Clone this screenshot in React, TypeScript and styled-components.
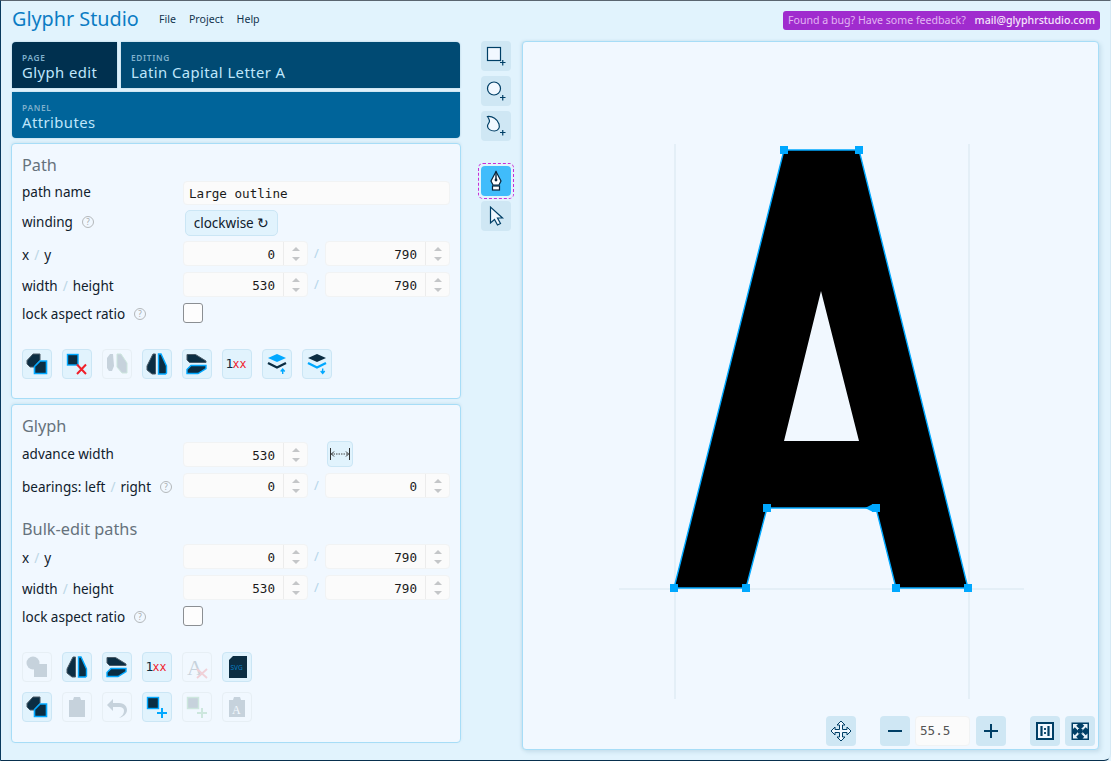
import styled, { createGlobalStyle } from 'styled-components';
import type { ReactNode } from 'react';

const GlobalStyle = createGlobalStyle`
    html, body {
        margin: 0;
        padding: 0;
        height: 761px;
        overflow: hidden;
        background: #e1f3fd;
        font-family: "Noto Sans", "Open Sans", sans-serif;
    }
`;

const Frame = styled.div`
    box-sizing: border-box;
    width: 1111px;
    height: 761px;
    background: #e1f3fd;
    border-left: 1px solid #0a3a5e;
    border-top: 1px solid #5a6570;
    border-bottom: 1px solid #08304e;
    border-right: 1px solid #d5e9f5;
    border-bottom-right-radius: 7px;
    padding: 0 11px 0 11px;
    display: flex;
    flex-direction: column;
`;

const TopBar = styled.header`
    height: 40px;
    display: flex;
    align-items: center;
    flex-shrink: 0;
`;

const Logo = styled.div`
    font-size: 19.8px;
    color: #0b7cc4;
    width: 147px;
    margin-top: -6px;
`;

const Menu = styled.div`
    display: flex;
    gap: 13px;
    font-size: 10.6px;
    color: #12344e;
    margin-top: -4px;
`;

const Feedback = styled.div`
    margin-left: auto;
    margin-right: -1px;
    margin-top: -2px;
    height: 19px;
    width: 317px;
    box-sizing: border-box;
    background: #a02cce;
    border-radius: 3px;
    display: flex;
    align-items: center;
    justify-content: space-between;
    padding: 0 5px;
    font-size: 10.6px;
    color: #e3b6f3;
    white-space: nowrap;

    b {
        font-weight: 500;
        color: #f6e6fb;
    }
`;

const Body = styled.div`
    display: flex;
    flex: 1;
`;

const LeftColumn = styled.div`
    width: 448px;
    display: flex;
    flex-direction: column;
    margin-top: 1px;
`;

const TileStack = styled.div`
    display: flex;
    flex-direction: column;
    gap: 4px;
`;

const TileRow = styled.div`
    display: flex;
    gap: 4px;
`;

const Tile = styled.div<{ $bg: string; $w?: number; $r: string }>`
    box-sizing: border-box;
    height: 46px;
    background: ${p => p.$bg};
    border-radius: ${p => p.$r};
    ${p => (p.$w ? `width: ${p.$w}px;` : 'flex: 1;')}
    padding: 11px 10px 0 10px;
    display: flex;
    flex-direction: column;
    box-shadow: 0 0 2px #9fc5da;
`;

const TileLabel = styled.span`
    font-size: 8.3px;
    line-height: 9px;
    font-weight: 600;
    letter-spacing: 0.7px;
    color: #7fb0cc;
`;

const TileValue = styled.span`
    font-size: 14.8px;
    line-height: 21px;
    letter-spacing: 0.45px;
    color: #bfe6fb;
`;

const Panel = styled.section<{ $h: number }>`
    box-sizing: border-box;
    width: 450px;
    height: ${p => p.$h}px;
    margin: 5px 0 0 -1px;
    background: #f1f8ff;
    border: 1px solid #a7ddf7;
    border-radius: 4px;
    padding: 11px 10px 0 10px;
    box-shadow: 0 -1px 3px #cfe5f1;
    display: flex;
    flex-direction: column;
`;

const Heading = styled.h2<{ $top?: number; $bottom: number }>`
    margin: ${p => p.$top ?? 0}px 0 ${p => p.$bottom}px 0;
    font-size: 16.3px;
    line-height: 21px;
    font-weight: 400;
    color: #66727c;
`;

const Row = styled.div<{ $h?: number }>`
    display: grid;
    grid-template-columns: 161px 125px 17px 125px;
    height: ${p => p.$h ?? 31}px;
    align-items: start;
`;

const Label = styled.label<{ $nudge?: number }>`
    font-size: 13.5px;
    line-height: 20px;
    padding-top: ${p => p.$nudge ?? 2}px;
    color: #10202c;
    white-space: nowrap;
    display: flex;
    align-items: center;

    i {
        font-style: normal;
        color: #bcd7e6;
        margin: 0 5px;
    }
`;

const Help = styled.span`
    box-sizing: border-box;
    display: inline-flex;
    align-items: center;
    justify-content: center;
    width: 12px;
    height: 12px;
    margin-left: 9px;
    border: 1px solid #b4b8bb;
    border-radius: 50%;
    font-size: 8px;
    color: #a5a9ac;
`;

const Slash = styled.span`
    text-align: center;
    font-size: 13px;
    line-height: 25px;
    color: #b6d6ea;
`;

const FieldBox = styled.div`
    box-sizing: border-box;
    height: 25px;
    display: flex;
    background: #fbfbfb;
    border: 1px solid #f1f3f4;
    border-radius: 4px;
`;

const FieldValue = styled.div<{ $right?: boolean }>`
    flex: 1;
    padding: 0 8px 0 5px;
    text-align: ${p => (p.$right ? 'right' : 'left')};
    font-family: "DejaVu Sans Mono", "Liberation Mono", monospace;
    font-size: 12.6px;
    line-height: ${p => (p.$right ? 25 : 23)}px;
    color: #1a1a1a;
`;

const Spinner = styled.div`
    width: 23px;
    border-left: 1px solid #ececec;
    display: flex;
    flex-direction: column;
    align-items: center;
    justify-content: center;
    gap: 6px;
`;

const Arrow = styled.span<{ $down?: boolean }>`
    width: 0;
    height: 0;
    border-left: 4px solid transparent;
    border-right: 4px solid transparent;
    ${p => (p.$down ? 'border-top' : 'border-bottom')}: 4px solid #c4c6c8;
`;

const NameField = styled(FieldBox)`
    grid-column: 2 / 5;
    height: 24px;
`;

const WindingButton = styled.button`
    box-sizing: border-box;
    margin: 0 0 0 2px;
    width: 93px;
    height: 26px;
    padding: 0;
    background: #e1f3fd;
    border: 1px solid #cbe6f5;
    border-radius: 5px;
    font-family: inherit;
    font-size: 13.5px;
    color: #10202c;
    white-space: nowrap;
`;

const CheckBox = styled.div`
    box-sizing: border-box;
    width: 20px;
    height: 20px;
    background: #fdfdfd;
    border: 1px solid #8b8f93;
    border-radius: 3px;
`;

const ActionRow = styled.div<{ $top: number }>`
    display: flex;
    gap: 10px;
    margin-top: ${p => p.$top}px;
`;

const ActionButton = styled.button<{ $off?: boolean }>`
    box-sizing: border-box;
    width: 30px;
    height: 30px;
    padding: 0;
    background: ${p => (p.$off ? '#f1f8ff' : '#e1f3fd')};
    border: 1px solid ${p => (p.$off ? '#e7eff5' : '#cbe6f5')};
    border-radius: 4px;
    display: flex;
    align-items: center;
    justify-content: center;

    svg {
        opacity: ${p => (p.$off ? 0.18 : 1)};
    }
`;

const FitButton = styled(ActionButton)`
    width: 26px;
    height: 26px;
    margin-left: 19px;
    margin-top: -1px;
`;

const ToolColumn = styled.div`
    width: 62px;
    flex-shrink: 0;
    display: flex;
    flex-direction: column;
    align-items: center;
    padding-left: 10px;
    box-sizing: border-box;
    gap: 5px;
`;

const ToolButton = styled.div<{ $on?: boolean; $gap?: number }>`
    width: 30px;
    height: 30px;
    margin-top: ${p => p.$gap ?? 0}px;
    border-radius: 4px;
    background: ${p => (p.$on ? '#40bcfb' : '#cfe7f4')};
    display: flex;
    align-items: center;
    justify-content: center;
    position: relative;
    flex-shrink: 0;
`;

const DashedRing = styled.span`
    position: absolute;
    inset: -3px;
    border: 1px dashed #c92bd8;
    border-radius: 5px;
`;

const Canvas = styled.main`
    position: relative;
    width: 578px;
    height: 709px;
    box-sizing: border-box;
    background: #f1f8ff;
    border: 1px solid #a7ddf7;
    border-radius: 4px;
    box-shadow: -1px 0 3px #c7dfec, 2px 2px 4px #c7dfec;
`;

const GlyphDrawing = styled.svg`
    position: absolute;
    left: -1px;
    top: -1px;
`;

const ZoomBar = styled.div`
    position: absolute;
    right: 3px;
    bottom: 3px;
    display: flex;
    align-items: center;
`;

const ZoomButton = styled(ToolButton)<{ $left?: number }>`
    margin-left: ${p => p.$left ?? 0}px;
`;

const ZoomField = styled.div`
    box-sizing: border-box;
    width: 55px;
    height: 30px;
    margin-left: 5px;
    background: #fbfbfb;
    border: 1px solid #f1f3f4;
    border-radius: 4px;
    padding-left: 4px;
    font-family: "DejaVu Sans Mono", "Liberation Mono", monospace;
    font-size: 12.6px;
    line-height: 28px;
    color: #555;
`;

const DARK = '#0b2d42';
const BLUE = '#00a8ff';
const NAVY = '#003f66';
const RED = '#f0202a';
const PALE = '#f1f8ff';

function Ico({ children }: { children: ReactNode }) {
    return (
        <svg width={30} height={30} viewBox="0 0 30 30" style={{ display: 'block', flexShrink: 0, margin: -1 }}>
            {children}
        </svg>
    );
}

const IconCombine = () => (
    <Ico>
        <path d="M5 11.500 11 5h7v6l-6 7H8l-3-3z" fill={DARK} stroke="#4a5a66" />
        <path d="M18 12h6.500v12.500H12.500V17.500z" fill={DARK} stroke={BLUE} strokeWidth="1.600" />
    </Ico>
);

const IconDelete = () => (
    <Ico>
        <rect x="5.500" y="5.500" width="10.500" height="10.500" fill={DARK} stroke={BLUE} strokeWidth="1.400" />
        <path d="M15 15.500 24 25M24 15.500 15 25" stroke={RED} strokeWidth="2" fill="none" />
    </Ico>
);

const IconPair = () => (
    <Ico>
        <path d="M5 9 8 5h3l1 12-2 5H7l-2-3z" fill={DARK} />
        <path d="M15 5h4l6 9v10h-5l-5-6z" fill={DARK} stroke="#2f9c50" />
    </Ico>
);

const IconFlipV = () => (
    <Ico>
        <path d="M5 17 11 5h2.500v20H10l-5-4z" fill={DARK} stroke="#4a5a66" />
        <path d="M16.500 5H19l5.500 12v7l-1 1h-7z" fill={DARK} stroke={BLUE} strokeWidth="1.400" />
    </Ico>
);

const IconFlipH = () => (
    <Ico>
        <path d="M5 5.500h8.500l10.500 6.500v1.500H7.500L5 11z" fill={DARK} stroke="#4a5a66" />
        <path d="M9 16.500h15v3l-8 5H5v-4z" fill={DARK} stroke={BLUE} strokeWidth="1.400" />
    </Ico>
);

const IconRound = () => (
    <Ico>
        <text x="3.500" y="19" fontFamily="DejaVu Sans Mono, monospace" fontSize="13" fill={DARK}>1</text>
        <text x="10.500" y="19" fontFamily="DejaVu Sans Mono, monospace" fontSize="11.600" fill={RED}>xx</text>
    </Ico>
);

const IconLayerUp = () => (
    <Ico>
        <path d="M6 9 15 5l9 4-9 4z" fill={BLUE} />
        <path d="M6 14 15 18.500 24 14" fill="none" stroke={DARK} strokeWidth="2.400" />
        <path d="M20.700 25v-4.500M18.700 22.500l2-2.500 2 2.500" stroke={BLUE} strokeWidth="1.400" fill="none" />
    </Ico>
);

const IconLayerDown = () => (
    <Ico>
        <path d="M6 9 15 5l9 4-9 4z" fill={DARK} />
        <path d="M6 14 15 18.500 24 14" fill="none" stroke={BLUE} strokeWidth="2.400" />
        <path d="M20.700 19.500V24M18.700 22l2 2.500 2-2.500" stroke={BLUE} strokeWidth="1.400" fill="none" />
    </Ico>
);

const IconCircles = () => (
    <Ico>
        <circle cx="11" cy="11" r="6.500" fill={DARK} />
        <rect x="12" y="12" width="13" height="13" fill={DARK} />
    </Ico>
);

const IconFont = () => (
    <Ico>
        <text x="5" y="23" fontFamily="Liberation Serif, serif" fontSize="22" fill={DARK}>A</text>
        <path d="M15 17 25 26M25 17 15 26" stroke={RED} strokeWidth="1.800" />
    </Ico>
);

const IconSvg = () => (
    <Ico>
        <path d="M11 4h14v22H7V8z" fill={DARK} />
        <text x="8.500" y="18" fontFamily="Noto Sans, sans-serif" fontSize="6.500" fill="#0a7fc0">SVG</text>
    </Ico>
);

const IconPaste = () => (
    <Ico>
        <path d="M7 8h4l1-3h6l1 3h4v17H7z" fill={DARK} />
    </Ico>
);

const IconUndo = () => (
    <Ico>
        <path d="M5 13 11 7v4h6c6 0 8 4 8 7 0 4-4 7-8 8 3-2 5-4 5-7s-2-4-5-4h-6v4z" fill={DARK} />
    </Ico>
);

const IconAddPath = ({ color }: { color: string }) => (
    <Ico>
        <rect x="5.500" y="5.500" width="11" height="11" fill={DARK} stroke={color} strokeWidth="1.400" />
        <path d="M15 21h10M20 16v10" stroke={color} strokeWidth="2" />
    </Ico>
);

const IconPasteFont = () => (
    <Ico>
        <path d="M7 8h4l1-3h6l1 3h4v17H7z" fill={DARK} />
        <text x="10" y="22" fontFamily="Liberation Serif, serif" fontSize="12" fill="#fff">A</text>
    </Ico>
);

const IconWidth = () => (
    <svg width="22" height="14" viewBox="0 0 22 14">
        <path d="M1.500 1v12M20.500 1v12" stroke="#333" />
        <path d="M2 7h18" stroke="#444" strokeDasharray="1.500 1" />
        <path d="M5 4.500 2.500 7 5 9.500M17 4.500 19.500 7 17 9.500" stroke="#333" fill="none" />
    </svg>
);

const ToolPlus = () => <path d="M19 21.500h5.500M21.750 19v5.500" stroke={NAVY} strokeWidth="1.200" />;

const IconNewRect = () => (
    <Ico>
        <rect x="6.500" y="6.500" width="13" height="13" fill={PALE} stroke={NAVY} strokeWidth="1.200" />
        <ToolPlus />
    </Ico>
);

const IconNewOval = () => (
    <Ico>
        <circle cx="13" cy="12.500" r="6.500" fill={PALE} stroke={NAVY} strokeWidth="1.200" />
        <ToolPlus />
    </Ico>
);

const IconNewPath = () => (
    <Ico>
        <path d="M6.500 5.500c5-.5 10 2.500 11.500 7.500 1 3.500-.5 7-4.500 7-4 0-7-2-7-5 0-2 2-3 2-5 0-1.500-1-3-2-4.500z" fill={PALE} stroke={NAVY} strokeWidth="1.200" />
        <ToolPlus />
    </Ico>
);

const IconPen = () => (
    <Ico>
        <path d="M15 5.500 20 15 18 19H12L10 15z" fill="#fff" stroke="#07233a" strokeWidth="1.200" />
        <path d="M15 5.500v8" stroke="#07233a" strokeWidth="1.400" />
        <circle cx="15" cy="14" r="1.400" fill="#07233a" />
        <rect x="11.500" y="20" width="7" height="4" fill="#fff" stroke="#07233a" strokeWidth="1.200" />
    </Ico>
);

const IconPointer = () => (
    <Ico>
        <path d="M9.500 6v16l4-3.500 3 5.500 3-1.500-3-5.500h5z" fill={PALE} stroke={NAVY} strokeWidth="1.200" />
    </Ico>
);

const IconMove = () => (
    <Ico>
        <path d="M15 5l4 4h-2.500v4.500H21V11l4 4-4 4v-2.500h-4.500V21H19l-4 4-4-4h2.500v-4.500H9V19l-4-4 4-4v2.500h4.500V9H11z" fill={PALE} stroke={NAVY} />
    </Ico>
);

const IconMinus = () => (
    <Ico>
        <path d="M8 15h14" stroke={NAVY} strokeWidth="2" />
    </Ico>
);

const IconPlus = () => (
    <Ico>
        <path d="M8 15h14M15 8v14" stroke={NAVY} strokeWidth="2" />
    </Ico>
);

const IconActual = () => (
    <Ico>
        <rect x="7" y="7" width="16" height="16" fill={PALE} stroke={NAVY} strokeWidth="2" />
        <path d="M11.500 10v10M18.500 10v10" stroke={NAVY} strokeWidth="2.200" />
        <path d="M15 12v2M15 16v2" stroke={NAVY} strokeWidth="1.800" />
    </Ico>
);

const IconFit = () => (
    <Ico>
        <rect x="6.500" y="6.500" width="17.500" height="17.500" fill={NAVY} />
        <path d="M8 8h5l-5 5zM22.500 8h-5l5 5zM8 22.500h5l-5-5zM22.500 22.500h-5l5-5z" fill="#e6f2f9" />
        <path d="M10 10l10.500 10.500M20.500 10 10 20.500" stroke="#e6f2f9" strokeWidth="2" />
        <rect x="13" y="13" width="4.500" height="4.500" fill={NAVY} />
    </Ico>
);

function NumberField({ value }: { value: string }) {
    return (
        <FieldBox>
            <FieldValue $right>{value}</FieldValue>
            <Spinner>
                <Arrow />
                <Arrow $down />
            </Spinner>
        </FieldBox>
    );
}

function PairRow({ label, a, b }: { label: ReactNode; a: string; b: string }) {
    return (
        <Row>
            <Label $nudge={4}>{label}</Label>
            <NumberField value={a} />
            <Slash>/</Slash>
            <NumberField value={b} />
        </Row>
    );
}

function LockRow() {
    return (
        <Row>
            <Label $nudge={1}>lock aspect ratio<Help>?</Help></Label>
            <CheckBox />
        </Row>
    );
}

const xy = <>x<i>/</i>y</>;
const wh = <>width<i>/</i>height</>;

const outerPath = 'M674 588 L784 150 L859 150 L968 588 L896 588 L876 508 L767 508 L746 588 Z';
const counterPath = 'M821 291 L859 441 L784 441 Z';

const handles = [
    [784, 150],
    [859, 150],
    [674, 588],
    [746, 588],
    [896, 588],
    [968, 588],
    [767, 508],
    [876, 508],
];

export default function App() {
    return (
        <>
            <GlobalStyle />
            <Frame>
                <TopBar>
                    <Logo>Glyphr Studio</Logo>
                    <Menu>
                        <span>File</span>
                        <span>Project</span>
                        <span>Help</span>
                    </Menu>
                    <Feedback>
                        <span>Found a bug? Have some feedback?</span>
                        <b>mail@glyphrstudio.com</b>
                    </Feedback>
                </TopBar>
                <Body>
                    <LeftColumn>
                        <TileStack>
                            <TileRow>
                                <Tile $bg="#00304f" $w={105} $r="4px 0 0 0">
                                    <TileLabel>PAGE</TileLabel>
                                    <TileValue>Glyph edit</TileValue>
                                </Tile>
                                <Tile $bg="#004a73" $r="0 4px 0 0">
                                    <TileLabel>EDITING</TileLabel>
                                    <TileValue>Latin Capital Letter A</TileValue>
                                </Tile>
                            </TileRow>
                            <TileRow>
                                <Tile $bg="#00649a" $r="0 0 4px 4px">
                                    <TileLabel>PANEL</TileLabel>
                                    <TileValue>Attributes</TileValue>
                                </Tile>
                            </TileRow>
                        </TileStack>

                        <Panel $h={256}>
                            <Heading $bottom={5}>Path</Heading>
                            <Row $h={29}>
                                <Label $nudge={1}>path name</Label>
                                <NameField>
                                    <FieldValue>Large outline</FieldValue>
                                </NameField>
                            </Row>
                            <Row>
                                <Label>winding<Help>?</Help></Label>
                                <WindingButton>clockwise ↻</WindingButton>
                            </Row>
                            <PairRow label={xy} a="0" b="790" />
                            <PairRow label={wh} a="530" b="790" />
                            <LockRow />
                            <ActionRow $top={15}>
                                <ActionButton><IconCombine /></ActionButton>
                                <ActionButton><IconDelete /></ActionButton>
                                <ActionButton $off><IconPair /></ActionButton>
                                <ActionButton><IconFlipV /></ActionButton>
                                <ActionButton><IconFlipH /></ActionButton>
                                <ActionButton><IconRound /></ActionButton>
                                <ActionButton><IconLayerUp /></ActionButton>
                                <ActionButton><IconLayerDown /></ActionButton>
                            </ActionRow>
                        </Panel>

                        <Panel $h={339}>
                            <Heading $bottom={5}>Glyph</Heading>
                            <Row>
                                <Label>advance width</Label>
                                <NumberField value="530" />
                                <FitButton as="button"><IconWidth /></FitButton>
                            </Row>
                            <PairRow
                                label={<>bearings: left<i>/</i>right<Help>?</Help></>}
                                a="0"
                                b="0"
                            />
                            <Heading $top={15} $bottom={4}>Bulk-edit paths</Heading>
                            <PairRow label={xy} a="0" b="790" />
                            <PairRow label={wh} a="530" b="790" />
                            <LockRow />
                            <ActionRow $top={15}>
                                <ActionButton $off><IconCircles /></ActionButton>
                                <ActionButton><IconFlipV /></ActionButton>
                                <ActionButton><IconFlipH /></ActionButton>
                                <ActionButton><IconRound /></ActionButton>
                                <ActionButton $off><IconFont /></ActionButton>
                                <ActionButton><IconSvg /></ActionButton>
                            </ActionRow>
                            <ActionRow $top={10}>
                                <ActionButton><IconCombine /></ActionButton>
                                <ActionButton $off><IconPaste /></ActionButton>
                                <ActionButton $off><IconUndo /></ActionButton>
                                <ActionButton><IconAddPath color={BLUE} /></ActionButton>
                                <ActionButton $off><IconAddPath color="#2f9c50" /></ActionButton>
                                <ActionButton $off><IconPasteFont /></ActionButton>
                            </ActionRow>
                        </Panel>
                    </LeftColumn>

                    <ToolColumn>
                        <ToolButton><IconNewRect /></ToolButton>
                        <ToolButton><IconNewOval /></ToolButton>
                        <ToolButton><IconNewPath /></ToolButton>
                        <ToolButton $on $gap={20}>
                            <DashedRing />
                            <IconPen />
                        </ToolButton>
                        <ToolButton><IconPointer /></ToolButton>
                    </ToolColumn>

                    <Canvas>
                        <GlyphDrawing width="578" height="709" viewBox="522 41 578 709">
                            <path d="M675 144V699M969 144V699M619 589H1024" stroke="#e4eff7" strokeWidth="2" fill="none" />
                            <path d={`${outerPath} ${counterPath}`} fill="#000" fillRule="evenodd" />
                            <path d={outerPath} fill="none" stroke={BLUE} strokeWidth="1.400" />
                            {handles.map(([x, y]) => (
                                <rect key={`${x}-${y}`} x={x - 4} y={y - 4} width="8" height="8" fill={BLUE} />
                            ))}
                            <path d="M873 504 L865 508 L873 512Z" fill={BLUE} />
                        </GlyphDrawing>
                        <ZoomBar>
                            <ToolButton><IconMove /></ToolButton>
                            <ZoomButton $left={24}><IconMinus /></ZoomButton>
                            <ZoomField>55.5</ZoomField>
                            <ZoomButton $left={6}><IconPlus /></ZoomButton>
                            <ZoomButton $left={24}><IconActual /></ZoomButton>
                            <ZoomButton $left={5}><IconFit /></ZoomButton>
                        </ZoomBar>
                    </Canvas>
                </Body>
            </Frame>
        </>
    );
}
